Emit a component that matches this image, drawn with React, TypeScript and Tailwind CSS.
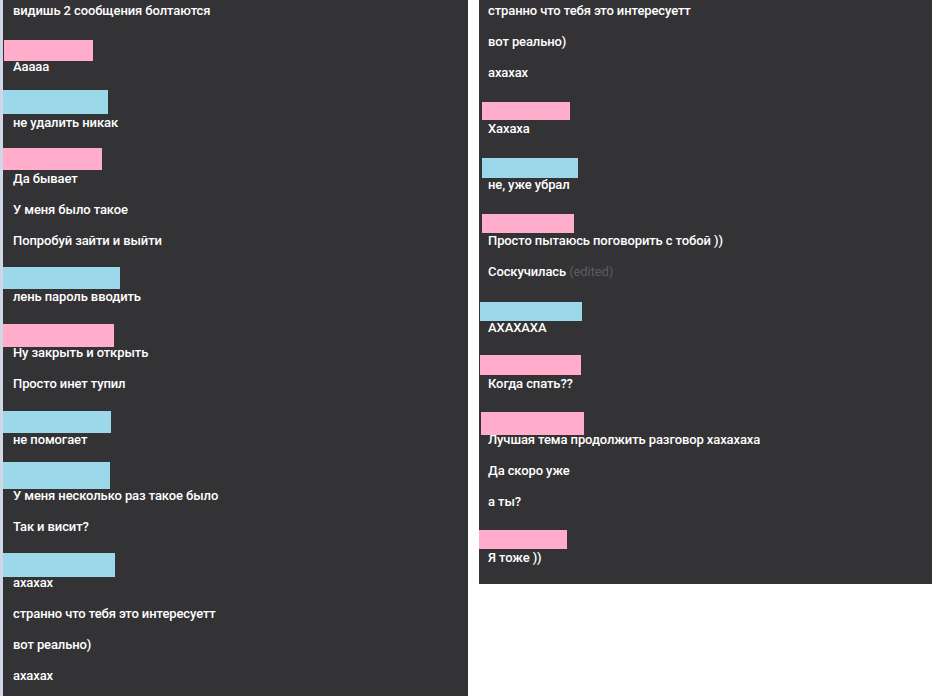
type Group = {
  bar?: string;
  lines: React.ReactNode[];
};

const PINK = "bg-[#ffadca]";
const BLUE = "bg-[#9bd8ea]";

const leftGroups: Group[] = [
  { lines: ["видишь 2 сообщения болтаются"] },
  { bar: `${PINK} mt-[14px] h-[21px] w-[89px] ml-px`, lines: ["Ааааа"] },
  { bar: `${BLUE} mt-[8px] h-[24px] w-[105px]`, lines: ["не удалить никак"] },
  {
    bar: `${PINK} mt-[10px] h-[22px] w-[99px]`,
    lines: ["Да бывает", "У меня было такое", "Попробуй зайти и выйти"],
  },
  { bar: `${BLUE} mt-[11px] h-[22px] w-[117px]`, lines: ["лень пароль вводить"] },
  {
    bar: `${PINK} mt-[12px] h-[23px] w-[111px]`,
    lines: ["Ну закрыть и открыть", "Просто инет тупил"],
  },
  { bar: `${BLUE} mt-[12px] h-[22px] w-[108px]`, lines: ["не помогает"] },
  {
    bar: `${BLUE} mt-[7px] h-[27px] w-[107px]`,
    lines: ["У меня несколько раз такое было", "Так и висит?"],
  },
  {
    bar: `${BLUE} mt-[11px] h-[24px] w-[112px]`,
    lines: ["ахахах", "странно что тебя это интересуетт", "вот реально)", "ахахах"],
  },
];

const rightGroups: Group[] = [
  { lines: ["странно что тебя это интересуетт", "вот реально)", "ахахах"] },
  { bar: `${PINK} mt-[14px] h-[18px] w-[88px] ml-[3px]`, lines: ["Хахаха"] },
  { bar: `${BLUE} mt-[14px] h-[20px] w-[96px] ml-[3px]`, lines: ["не, уже убрал"] },
  {
    bar: `${PINK} mt-[14px] h-[19px] w-[92px] ml-[3px]`,
    lines: [
      "Просто пытаюсь поговорить с тобой ))",
      <>
        Соскучилась <span className="font-normal text-[#5c5c61]">(edited)</span>
      </>,
    ],
  },
  { bar: `${BLUE} mt-[15px] h-[19px] w-[102px] ml-px`, lines: ["АХАХАХА"] },
  { bar: `${PINK} mt-[12px] h-[20px] w-[101px] ml-px`, lines: ["Когда спать??"] },
  {
    bar: `${PINK} mt-[13px] h-[23px] w-[103px] ml-[2px]`,
    lines: ["Лучшая тема продолжить разговор хахахаха", "Да скоро уже", "а ты?"],
  },
  { bar: `${PINK} mt-[13px] h-[19px] w-[88px]`, lines: ["Я тоже ))"] },
];

function Chat({ groups, pad }: { groups: Group[]; pad: string }) {
  return (
    <div className="-mt-[5px]">
      {groups.map((g, i) => (
        <div key={i}>
          {g.bar && (
            // username hidden behind a coloured block
            <div className="h-[25px] flow-root">
              <div className={g.bar} />
            </div>
          )}
          {g.lines.map((line, j) => (
            <div key={j} className={`h-[31px] flex items-center ${pad}`}>
              <span className="whitespace-nowrap">{line}</span>
            </div>
          ))}
        </div>
      ))}
    </div>
  );
}

export default function App() {
  return (
    <div className="flex h-[696px] w-[932px] overflow-hidden bg-white font-['Roboto',sans-serif] text-[13px] font-medium tracking-[-0.1px] text-white">
      <div className="w-[3px] shrink-0 bg-[#cfd6e6]" />
      <div className="w-[465px] shrink-0 bg-[#333335]">
        <Chat groups={leftGroups} pad="pl-[10px]" />
      </div>
      <div className="ml-[11px] w-[453px] shrink-0 self-start bg-[#333335] pb-[11px]">
        <Chat groups={rightGroups} pad="pl-[9px]" />
      </div>
    </div>
  );
}
